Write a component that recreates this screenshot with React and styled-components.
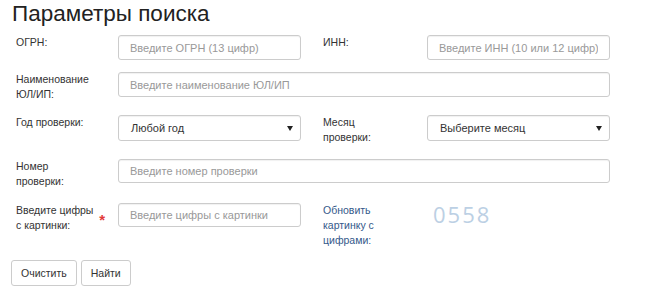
import React from "react";
import styled, { createGlobalStyle } from "styled-components";

const GlobalStyle = createGlobalStyle`
  body {
    margin: 0;
    background: #fff;
    font-family: "Liberation Sans", Arial, sans-serif;
    color: #333;
  }
`;

const Page = styled.div`
  width: 650px;
  height: 294px;
  overflow: hidden;
  padding: 0 0 0 11px;
  box-sizing: border-box;
`;

const Title = styled.h1`
  margin: 0;
  padding: 0 0 0 1px;
  height: 35px;
  font-size: 22.5px;
  font-weight: normal;
  line-height: 28px;
  color: #222;
`;

const Grid = styled.div`
  display: grid;
  margin-left: 5px;
  grid-template-columns: 102px 183px 22px 104px 183px;
  grid-template-rows: 25px 31px 32px 32px 45px;
  row-gap: 12px;
  align-items: start;
`;

const Label = styled.div`
  grid-column: ${p => p.$col};
  font-size: 10.5px;
  line-height: 15px;
  color: ${p => (p.$link ? "#34598a" : "#333")};
  display: flex;
  align-items: center;
  justify-content: space-between;
  padding-right: 13px;
`;

const Required = styled.span`
  color: #e23a3a;
  font-size: 15px;
  font-weight: bold;
  margin-top: 3px;
`;

const Input = styled.input`
  grid-column: ${p => p.$span || "auto"};
  box-sizing: border-box;
  width: 100%;
  height: ${p => p.$h || 25}px;
  border: 1px solid #ccc;
  border-radius: 3px;
  box-shadow: inset 0 1px 1px rgba(0, 0, 0, 0.06);
  padding: 0 11px;
  font-family: inherit;
  font-size: 11px;
  color: #333;
  outline: none;
  &::placeholder {
    color: #999;
  }
`;

const Select = styled.div`
  position: relative;
  box-sizing: border-box;
  height: 26px;
  border: 1px solid #ccc;
  border-radius: 3px;
  box-shadow: inset 0 1px 1px rgba(0, 0, 0, 0.06);
  padding: 0 12px;
  font-size: 11px;
  line-height: 24px;
  color: #333;
`;

const Arrow = styled.span`
  position: absolute;
  right: 7px;
  top: 10px;
  width: 0;
  height: 0;
  border-left: 3px solid transparent;
  border-right: 3px solid transparent;
  border-top: 5px solid #222;
`;

const Captcha = styled.div`
  padding-left: 6px;
  font-size: 22px;
  line-height: 22px;
  letter-spacing: 2px;
  color: #bcd0e4;
  font-family: "Open Sans", "Liberation Sans", sans-serif;
`;

const Buttons = styled.div`
  display: flex;
  gap: 4px;
  margin-top: 12px;
`;

const Button = styled.button`
  height: 26px;
  padding: 0 9px;
  background: #fff;
  border: 1px solid #ccc;
  border-radius: 3px;
  font-family: inherit;
  font-size: 10.5px;
  color: #333;
`;

export default function App() {
  return (
    <Page>
      <GlobalStyle />
      <Title>Параметры поиска</Title>
      <Grid>
        <Label $col={1}>ОГРН:</Label>
        <Input placeholder="Введите ОГРН (13 цифр)" />
        <span />
        <Label $col={4}>ИНН:</Label>
        <Input placeholder="Введите ИНН (10 или 12 цифр)" />

        <Label $col={1}>Наименование<br />ЮЛ/ИП:</Label>
        <Input $span="2 / 6" placeholder="Введите наименование ЮЛ/ИП" />

        <Label $col={1}>Год проверки:</Label>
        <Select>Любой год<Arrow /></Select>
        <span />
        <Label $col={4}>Месяц<br />проверки:</Label>
        <Select>Выберите месяц<Arrow /></Select>

        <Label $col={1}>Номер<br />проверки:</Label>
        <Input $span="2 / 6" $h={24} placeholder="Введите номер проверки" />

        <Label $col={1}>
          <span>Введите цифры<br />с картинки:</span>
          <Required>*</Required>
        </Label>
        <Input $h={24} placeholder="Введите цифры с картинки" />
        <span />
        <Label $col={4} $link>Обновить<br />картинку с<br />цифрами:</Label>
        <Captcha>0558</Captcha>
      </Grid>
      <Buttons>
        <Button>Очистить</Button>
        <Button>Найти</Button>
      </Buttons>
    </Page>
  );
}
